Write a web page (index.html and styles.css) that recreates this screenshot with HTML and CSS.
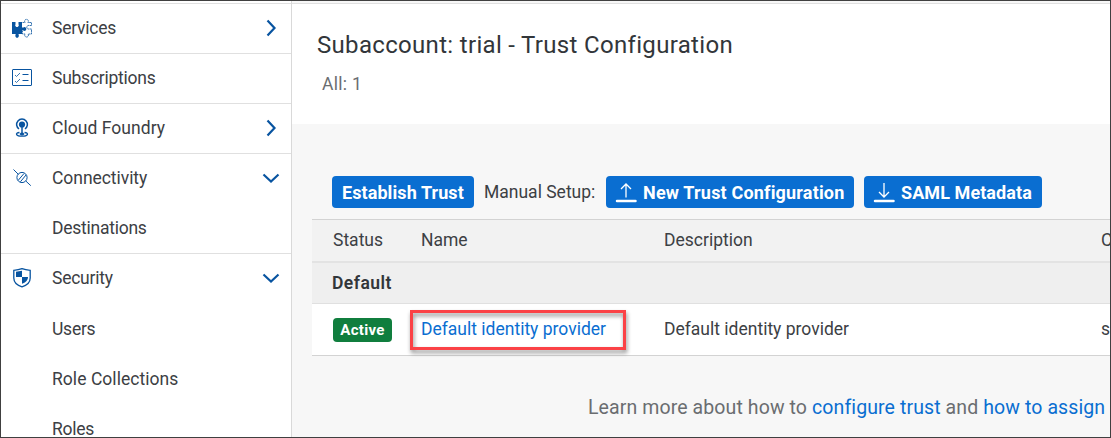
FILE: index.html
```html
<!DOCTYPE html>
<html lang="en">
<head>
<meta charset="utf-8">
<title>Trust Configuration</title>
<link rel="stylesheet" href="styles.css">
</head>
<body>
<div class="app">
  <nav class="sidebar">
    <a class="nav-item">
      <svg class="nav-icon" viewBox="0 0 22 22"><path fill="#0854a0" d="M1 5h3.500v2.200a1.800 1.800 0 1 0 3 0V5H11v5.600h1.400a1.800 1.800 0 1 1 0 2.800H11V17H7.600v.8a1.800 1.800 0 1 1-3 0V17H1z"/><path fill="none" stroke="#0854a0" stroke-width=".8" stroke-dasharray="2 .5" d="M11.500 5.500h2.600a1.900 1.900 0 1 1 2.800 0h3.600v3h-2.500a1.800 1.800 0 1 0 0 3.500h2.500v5h-3.400a1.900 1.900 0 1 1-3 0h-2.600v-3"/></svg>
      <span class="nav-label">Services</span>
      <svg class="chevron" viewBox="0 0 18 18"><path d="M5.500 1.500l7 7.500-7 7.500"/></svg>
    </a>
    <a class="nav-item">
      <svg class="nav-icon line" viewBox="0 0 22 22"><rect x="1.500" y="2.500" width="19" height="16" rx=".5"/><path stroke-width=".8" d="M4 8l1.500 1.500L9 6M4 14l1.500 1.500L9 12"/><path d="M11.500 7.500h6M11.500 13.500h6"/></svg>
      <span class="nav-label">Subscriptions</span>
    </a>
    <a class="nav-item">
      <svg class="nav-icon line" viewBox="0 0 22 22"><path stroke-width="1.500" d="M8 12a5.400 5.400 0 1 1 6 0"/><circle cx="11" cy="7.500" r="3.100" fill="#0854a0" stroke="none"/><path stroke-width="1.500" d="M11 9v8"/><path stroke-width="1.300" d="M8.500 15.500c-5 .6-3.500 3.700 2.500 3.700s7.500-3.100 2.500-3.700"/><ellipse cx="11" cy="17" rx="2" ry="1" fill="#0854a0"/></svg>
      <span class="nav-label wide">Cloud Foundry</span>
      <svg class="chevron" viewBox="0 0 18 18"><path d="M5.500 1.500l7 7.500-7 7.500"/></svg>
    </a>
    <a class="nav-item open">
      <svg class="nav-icon line" viewBox="0 0 22 22"><path d="M2.500 2.500l4.800 4.800M14.800 14l5 4.700"/><circle cx="11" cy="10.500" r="5.100"/><path d="M7.300 13.200L13 6.500M9.400 14.800l5.600-6.800"/></svg>
      <span class="nav-label medium">Connectivity</span>
      <svg class="chevron" viewBox="0 0 18 18"><path d="M1.500 5.500L9 12.500l7.500-7"/></svg>
    </a>
    <a class="nav-item child">
      <span class="nav-label">Destinations</span>
    </a>
    <a class="nav-item open">
      <svg class="nav-icon line" viewBox="0 0 22 22"><path stroke-width="1.300" d="M2.800 3.300Q7.500 3 11 1.700q3.500 1.300 8.200 1.600V11c0 4.500-4 7.500-8.200 8.800C6.800 18.500 2.800 15.500 2.800 11z"/><path fill="#0854a0" stroke="none" d="M5 4.800l6-1V10H5zM11 10h6c0 3.500-2.500 5.500-6 6.800z"/></svg>
      <span class="nav-label">Security</span>
      <svg class="chevron" viewBox="0 0 18 18"><path d="M1.500 5.500L9 12.500l7.500-7"/></svg>
    </a>
    <a class="nav-item open child first"><span class="nav-label">Users</span></a>
    <a class="nav-item open child"><span class="nav-label wide">Role Collections</span></a>
    <a class="nav-item open child"><span class="nav-label">Roles</span></a>
  </nav>
  <main class="main">
    <header class="page-header">
      <h1 class="title">Subaccount: trial - Trust Configuration</h1>
      <p class="count">All: 1</p>
    </header>
    <section class="content">
      <div class="toolbar">
        <button class="button establish">Establish Trust</button>
        <span class="setup">Manual Setup:</span>
        <button class="button new-trust"><svg class="button-icon" viewBox="0 0 22 22"><path d="M11 16.500V3M6 8l5-5 5 5"/><path class="base" d="M2 20h18.500"/></svg>New Trust Configuration</button>
        <button class="button saml"><svg class="button-icon" viewBox="0 0 22 22"><path d="M11 2V15.500M6 11l5 5 5-5"/><path class="base" d="M2 20h18.500"/></svg>SAML Metadata</button>
      </div>
      <div class="table">
        <div class="row head"><span>Status</span><span>Name</span><span>Description</span><span>C</span></div>
        <div class="group">Default</div>
        <div class="row data">
          <span><b class="badge">Active</b></span>
          <span class="cell name-cell"><a class="link">Default identity provider</a><i class="highlight"></i></span>
          <span class="cell">Default identity provider</span>
          <span class="cell">s</span>
        </div>
      </div>
      <p class="learn">Learn more about how to <a class="link">configure trust</a> and <a class="link">how to assign</a></p>
    </section>
  </main>
</div>
</body>
</html>
```
FILE: styles.css
```css
* { box-sizing: border-box; }
body {
  margin: 0;
  font-family: Roboto, "Liberation Sans", sans-serif;
  font-size: 17.5px;
  color: #3c4044;
}
.app {
  display: flex;
  width: 1111px;
  height: 438px;
  border: 1px solid #404040;
  background: #f7f7f7;
  overflow: hidden;
}
.sidebar {
  width: 291px;
  flex: none;
  padding-top: 2px;
  background: #fff;
  border-right: 1px solid #d9d9d9;
}
.nav-item {
  display: flex;
  align-items: center;
  height: 50px;
  padding: 0 11px 1px 10px;
  border-top: 1px solid #e0e0e0;
}
.child { border-top-color: transparent; }
.first { height: 51px; padding-top: 1px; }
.nav-icon { width: 22px; height: 22px; flex: none; }
.line { fill: none; stroke: #0854a0; }
.nav-label { margin-left: 19px; padding-bottom: 1px; flex: 1; letter-spacing: -0.25px; white-space: nowrap; }
.medium { letter-spacing: -0.05px; }
.wide { letter-spacing: 0.05px; }
.child .nav-label { margin-left: 41px; }
.chevron { width: 18px; height: 18px; fill: none; stroke: #0854a0; stroke-width: 2.2; }
.main { flex: 1; min-width: 0; }
.page-header {
  height: 121px;
  margin-top: 2px;
  padding: 26px 0 0 25px;
  border-top: 1px solid #e0e0e0;
  background: #fff;
}
.title { margin: 0; font-size: 24px; line-height: 30px; font-weight: 400; letter-spacing: 0.32px; color: #32363a; }
.count { margin: 13px 0 0 5px; line-height: 22px; letter-spacing: 0.3px; color: #6a6d70; }
.content { padding: 52px 0 0 20px; }
.toolbar { display: flex; align-items: center; height: 32px; padding-left: 20px; gap: 10px; white-space: nowrap; }
.button {
  display: flex;
  align-items: center;
  gap: 6px;
  height: 32px;
  padding: 0 0 0 9px;
  border: 0;
  border-radius: 4px;
  background: #0a6ed1;
  color: #fff;
  font: 700 18px Roboto, "Liberation Sans", sans-serif;
  letter-spacing: 0.08px;
}
.establish { width: 142px; padding-left: 10px; }
.setup { width: 112px; padding-bottom: 1px; }
.new-trust { width: 248px; letter-spacing: 0.18px; }
.saml { width: 178px; }
.button-icon { width: 22px; height: 22px; flex: none; fill: none; stroke: #fff; stroke-width: 1.3; }
.button .base { stroke-width: 2.5; stroke-linecap: round; }
.table { margin-top: 11px; border-top: 1px solid #d3d3d3; }
.row {
  display: grid;
  grid-template-columns: 88px 243px 437px 40px;
  align-items: center;
  padding-left: 21px;
  white-space: nowrap;
}
.head { height: 43px; padding-bottom: 1px; background: #f2f2f2; border-bottom: 2px solid #e3e3e3; }
.group {
  height: 41px;
  padding-left: 20px;
  line-height: 41px;
  background: #efefef;
  border-bottom: 1px solid #e0e0e0;
  font-weight: 600;
  letter-spacing: 0.45px;
  color: #32363a;
}
.data { height: 52px; background: #fff; border-bottom: 1px solid #d3d3d3; }
.cell { padding-bottom: 1px; }
.badge {
  display: block;
  width: 59px;
  height: 24px;
  border-radius: 4px;
  background: #107e3e;
  color: #fff;
  font-size: 15px;
  line-height: 25px;
  letter-spacing: 0.3px;
  text-align: center;
}
.link { color: #0a6ed1; }
.name-cell { position: relative; }
.highlight {
  position: absolute;
  left: -11px;
  top: -9px;
  width: 216px;
  height: 40px;
  border: 3px solid #fb4246;
  filter: drop-shadow(1px 3px 2px rgba(0, 0, 0, .45));
}
.learn { margin: 40px 0 0 276px; font-size: 19.5px; line-height: 24px; letter-spacing: 0.1px; color: #6a6d70; white-space: nowrap; }
```
